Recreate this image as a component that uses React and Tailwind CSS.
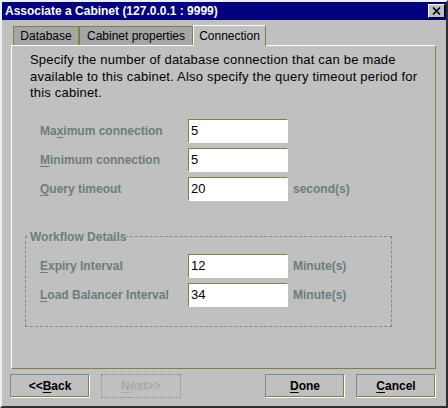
import React from "react";

const font = { fontFamily: '"Liberation Sans", Arial, sans-serif' };

function U({ children }) {
  return <span className="underline underline-offset-2">{children}</span>;
}

function Field({ label, value, suffix }) {
  return (
    <div className="flex items-center h-[24px]">
      <div className="w-[148px] text-[12px] font-bold text-[#6a7e7e]">{label}</div>
      <div className="w-[100px] h-[24px] bg-white border border-t-[#808040] border-l-[#808040] border-r-white border-b-white flex items-center pl-[2px] text-[13px] text-black">
        {value}
      </div>
      {suffix && (
        <div className="ml-[5px] text-[12px] font-bold text-[#6a7e7e]">{suffix}</div>
      )}
    </div>
  );
}

function Button({ children, disabled }) {
  if (disabled) {
    return (
      <div className="w-[80px] h-[24px] border border-dotted border-[#8a8a8a] flex items-center justify-center text-[12px] font-bold text-[#a9a9a9]">
        {children}
      </div>
    );
  }
  return (
    <div className="w-[80px] h-[24px] border border-t-[#6f9090] border-l-[#6f9090] border-r-white border-b-white shadow-[inset_-1px_-1px_0_#808040] flex items-center justify-center text-[12px] font-bold text-black">
      {children}
    </div>
  );
}

export default function App() {
  return (
    <div
      style={font}
      className="w-[448px] h-[408px] bg-[#c0c0c0] border-2 border-t-[#efefef] border-l-[#efefef] border-r-[#303030] border-b-[#303030] flex flex-col"
    >
      {/* title bar */}
      <div className="h-[18px] bg-[#000080] flex items-center justify-between pl-[3px] pr-[1px]">
        <span className="text-[12px] font-bold text-white">Associate a Cabinet (127.0.0.1 : 9999)</span>
        <div className="w-[17px] h-[14px] bg-[#c0c0c0] border border-t-white border-l-white border-r-black border-b-black flex items-center justify-center">
          <svg width="9" height="8" viewBox="0 0 9 8">
            <path d="M1 0.5 L8 7.5 M8 0.5 L1 7.5" stroke="#000" strokeWidth="1.6" />
          </svg>
        </div>
      </div>

      {/* tabs */}
      <div className="ml-[9px] mt-[5px] flex items-end h-[20px] pl-[2px] text-[12px] text-black">
        <div className="w-[66px] h-[19px] bg-[#a6a6a6] border border-[#808040] border-b-0 flex items-center justify-center">
          Database
        </div>
        <div className="w-[114px] h-[19px] bg-[#a6a6a6] border border-[#808040] border-b-0 flex items-center justify-center">
          Cabinet properties
        </div>
        <div className="relative z-10 -mb-px w-[73px] h-[21px] bg-[#c0c0c0] border border-t-white border-l-white border-r-[#808040] border-b-0 flex items-center justify-center pb-[1px]">
          Connection
        </div>
      </div>

      {/* panel */}
      <div className="ml-[9px] w-[425px] h-[324px] border border-t-white border-l-white border-r-[#808040] border-b-[#808040] px-[13px] pt-[6px]">
        <p className="pl-[5px] text-[13px] tracking-[0.2px] leading-[16.5px] text-black">
          Specify the number of database connection that can be made
          <br />
          available to this cabinet. Also specify the query timeout period for
          <br />
          this cabinet.
        </p>

        <div className="mt-[17px] pl-[15px] flex flex-col gap-[5px]">
          <Field label={<>Ma<U>x</U>imum connection</>} value="5" />
          <Field label={<><U>M</U>inimum connection</>} value="5" />
          <Field label={<><U>Q</U>uery timeout</>} value="20" suffix="second(s)" />
        </div>

        <fieldset className="mt-[28px] w-[367px] border border-dashed border-[#8a8a8a] pt-[9px] pb-[19px]">
          <legend className="ml-[4px] text-[12px] font-bold text-[#6a7e7e] leading-[16px]">Workflow Details</legend>
          <div className="pl-[14px] flex flex-col gap-[5px]">
            <Field label={<><U>E</U>xpiry Interval</>} value="12" suffix="Minute(s)" />
            <Field label={<><U>L</U>oad Balancer Interval</>} value="34" suffix="Minute(s)" />
          </div>
        </fieldset>
      </div>

      {/* buttons */}
      <div className="mt-[5px] ml-[8px] mr-[10px] flex items-center">
        <Button>&lt;&lt;<U>B</U>ack</Button>
        <div className="ml-[11px]">
          <Button disabled><U>N</U>ext&gt;&gt;</Button>
        </div>
        <div className="ml-auto flex gap-[11px]">
          <Button><U>D</U>one</Button>
          <Button><U>C</U>ancel</Button>
        </div>
      </div>
    </div>
  );
}
